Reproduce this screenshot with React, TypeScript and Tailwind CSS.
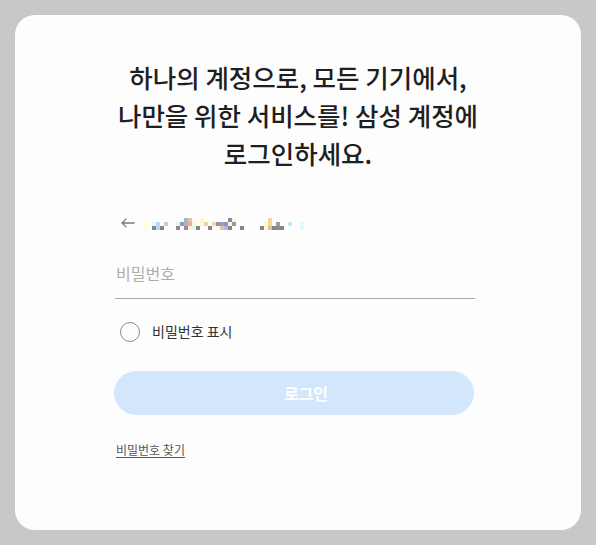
import React from "react";

// blurred email shown as a pixel mosaic: [top, mid, bottom] colours per column
const mosaic: (string | null)[][] = [
  [null, "#fffbe0", "#fffbe0"],
  [null, null, null],
  [null, "#dff7fb", "#858585"],
  [null, "#b5dcf6", "#b5dcf6"],
  [null, null, "#858585"],
  [null, "#a9d2f6", null],
  [null, null, null],
  [null, null, null],
  [null, "#d9f6f8", "#9b8384"],
  [null, "#8f9cb8", null],
  ["#9fb4d8", "#9fb4d8", "#a08a8a"],
  ["#e8c2a2", "#e2b38e", "#fbf3dc"],
  [null, "#fff6d2", "#dff6f7"],
  [null, null, "#858585"],
  ["#fff8cf", "#fff6d2", null],
  [null, "#fbd2aa", null],
  [null, null, "#858585"],
  [null, "#fbd2aa", null],
  [null, "#a48b9e", null],
  [null, "#8da6d4", "#e9c0a0"],
  [null, "#9c90b0", "#a5bfe0"],
  ["#8984a8", "#fff6d2", "#858585"],
  ["#fff8cf", "#9c90b0", null],
  [null, null, null],
  [null, null, "#858585"],
  [null, null, null],
  [null, null, null],
  [null, null, null],
  [null, null, null],
  [null, null, "#858585"],
  [null, "#fff6d2", "#fff6d2"],
  ["#fbd0a6", "#fbd0a6", "#e9c0a0"],
  [null, null, "#858585"],
  [null, "#8f9cb8", "#8c8c8c"],
  [null, null, "#858585"],
  [null, null, null],
  [null, "#c6e6fb", null],
  [null, null, null],
  [null, null, null],
  [null, "#e3fbfd", "#e3fbfd"],
];

const Mosaic: React.FC = () => (
  <div className="flex">
    {mosaic.map((col, i) => (
      <div key={i} className="flex flex-col">
        {col.map((c, j) => (
          <div key={j} className="h-[4px] w-[4px]" style={{ backgroundColor: c ?? "transparent" }} />
        ))}
      </div>
    ))}
  </div>
);

const App: React.FC = () => {
  return (
    <div
      className="min-h-[545px] w-full bg-[#c8c8c8] p-[15px]"
      style={{ fontFamily: '"Noto Sans CJK KR", "Noto Sans", sans-serif' }}
    >
      <div className="h-[515px] rounded-[20px] bg-[#fdfdfd] pl-[100px] pt-[43px]">
        <div className="w-[360px]">
          <h1 className="mr-[-6px] text-center text-[25.5px] font-medium leading-[38px] text-[#1f1f1f]">
            하나의 계정으로, 모든 기기에서,
            <br />
            나만을 위한 서비스를! 삼성 계정에
            <br />
            로그인하세요.
          </h1>

          <div className="mt-[41px] flex h-[20px] items-center pl-[6px]">
            <svg width="14" height="10" viewBox="0 0 14 10" fill="none" stroke="#7a7a7a" strokeWidth="1.3">
              <path d="M13.5 5H1M5.5 0.6 1 5l4.5 4.4" />
            </svg>
            <div className="ml-[9px] mt-[1px]">
              <Mosaic />
            </div>
          </div>

          <div className="mt-[28px] border-b border-[#a8a8a8] pb-[13px] pl-[1px]">
            <span className="text-[16px] leading-[24px] text-[#acacac]">비밀번호</span>
          </div>

          <label className="mt-[22px] flex items-center">
            <span className="ml-[5px] h-[20px] w-[20px] rounded-full border-[1.5px] border-[#8a8a8a]" />
            <span className="ml-[12px] text-[14px] text-[#333]">비밀번호 표시</span>
          </label>

          <button className="ml-[-1px] mt-[29px] h-[44px] w-[360px] rounded-full bg-[#d3e7fc] pl-[24px] text-[16px] font-bold text-white">
            로그인
          </button>

          <div className="mt-[21px] pl-[1px]">
            <a className="text-[12px] text-[#555] underline underline-offset-2">비밀번호 찾기</a>
          </div>
        </div>
      </div>
    </div>
  );
};

export default App;
